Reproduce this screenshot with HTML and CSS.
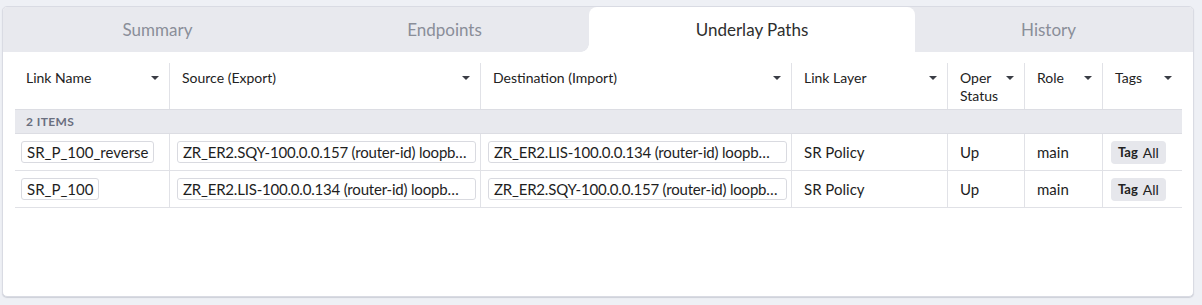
FILE: index.html
```html
<!DOCTYPE html>
<html>
<head>
<meta charset="utf-8">
<link rel="stylesheet" href="styles.css">
</head>
<body>
<div class="card">
  <div class="tabbar">
    <div class="tab">Summary</div>
    <div class="tab tab-before">Endpoints</div>
    <div class="tab tab-active">Underlay Paths</div>
    <div class="tab tab-after">History</div>
  </div>
  <div class="grid">
    <div class="row head">
      <div class="hcell"><span class="htext">Link Name</span><span class="caret"></span></div>
      <div class="hcell"><span class="htext">Source (Export)</span><span class="caret"></span></div>
      <div class="hcell"><span class="htext">Destination (Import)</span><span class="caret"></span></div>
      <div class="hcell"><span class="htext">Link Layer</span><span class="caret"></span></div>
      <div class="hcell"><span class="htext">Oper<br>Status</span><span class="caret"></span></div>
      <div class="hcell"><span class="htext">Role</span><span class="caret"></span></div>
      <div class="hcell"><span class="htext">Tags</span><span class="caret"></span></div>
    </div>
    <div class="group">2 ITEMS</div>
    <div class="row data">
      <div class="cell boxed first"><span class="box">SR_P_100_reverse</span></div>
      <div class="cell boxed"><span class="box wide">ZR_ER2.SQY-100.0.0.157 (router-id) loopb…</span></div>
      <div class="cell boxed"><span class="box wide">ZR_ER2.LIS-100.0.0.134 (router-id) loopb…</span></div>
      <div class="cell">SR Policy</div>
      <div class="cell">Up</div>
      <div class="cell">main</div>
      <div class="cell tagcell"><span class="chip"><b>Tag</b> All</span></div>
    </div>
    <div class="row data">
      <div class="cell boxed first"><span class="box">SR_P_100</span></div>
      <div class="cell boxed"><span class="box wide">ZR_ER2.LIS-100.0.0.134 (router-id) loopb…</span></div>
      <div class="cell boxed"><span class="box wide">ZR_ER2.SQY-100.0.0.157 (router-id) loopb…</span></div>
      <div class="cell">SR Policy</div>
      <div class="cell">Up</div>
      <div class="cell">main</div>
      <div class="cell tagcell"><span class="chip"><b>Tag</b> All</span></div>
    </div>
  </div>
</div>
</body>
</html>
```

FILE: styles.css
```css
* { box-sizing: border-box; }

html, body {
  margin: 0;
  padding: 0;
  background: #eef0f5;
}

body {
  font-family: Lato, "Noto Sans", sans-serif;
  color: #1e1e1e;
  padding: 6px 8px 8px 2px;
}

.card {
  height: 291px;
  background: #fff;
  border: 1px solid #d9dbe3;
  border-radius: 5px;
  box-shadow: 0 1px 1px rgba(60, 64, 90, 0.18);
  overflow: hidden;
}

.tabbar {
  display: grid;
  grid-template-columns: 285px 289px 326px 1fr;
  height: 45px;
  padding: 0 11px 0 12px;
  background: #e8e9ee;
}

.tab {
  display: flex;
  align-items: center;
  justify-content: center;
  font-size: 17px;
  color: #8a8e99;
  background: #e8e9ee;
  position: relative;
}

.tab-active {
  background: #fff;
  color: #2e2e2e;
  border-radius: 8px 8px 0 0;
}

.tab-active::before,
.tab-active::after {
  content: "";
  position: absolute;
  bottom: 0;
  width: 8px;
  height: 8px;
}

.tab-active::before {
  left: -8px;
  background: radial-gradient(circle at 0 0, #e8e9ee 7.5px, #fff 8px);
}

.tab-active::after {
  right: -8px;
  background: radial-gradient(circle at 100% 0, #e8e9ee 7.5px, #fff 8px);
}

.grid {
  padding: 11px 11px 0 12px;
}

.row {
  display: grid;
  grid-template-columns: 154px 311px 311px 156px 77px 78px 1fr;
}

.head {
  height: 47px;
  border-bottom: 1px solid #dfe0e6;
}

.hcell {
  display: flex;
  align-items: flex-start;
  justify-content: space-between;
  padding: 6px 10px 0 12px;
  border-left: 1px solid #e1e2e7;
  font-size: 14px;
  line-height: 18px;
  color: #222;
}

.hcell:first-child {
  border-left: none;
  padding-left: 11px;
}

.caret {
  flex: none;
  width: 0;
  height: 0;
  margin-top: 7px;
  border-left: 4px solid transparent;
  border-right: 4px solid transparent;
  border-top: 4px solid #3a3d45;
}

.group {
  height: 25px;
  background: #e8e9ee;
  border-top: 1px solid #dcdde3;
  border-bottom: 1px solid #dcdde3;
  margin-top: -1px;
  padding-left: 11px;
  font-size: 12px;
  font-weight: 700;
  letter-spacing: 0.4px;
  line-height: 23px;
  color: #6a6f7f;
}

.data {
  height: 37px;
  border-bottom: 1px solid #e0e1e6;
}

.cell {
  display: flex;
  align-items: center;
  min-width: 0;
  padding: 0 12px;
  border-left: 1px solid #e1e2e7;
  font-size: 15px;
  color: #1e1e1e;
}

.cell.first {
  border-left: none;
}

.cell.boxed {
  padding: 0 4px 0 7px;
}

.cell.boxed.first {
  padding-left: 6px;
}

.box {
  display: block;
  height: 22px;
  line-height: 20px;
  padding: 0 5px;
  border: 1px solid #d9dae0;
  border-radius: 3px;
  white-space: nowrap;
  overflow: hidden;
  text-overflow: ellipsis;
}

.box.wide {
  width: 100%;
  letter-spacing: -0.2px;
}

.tagcell {
  padding-left: 8px;
}

.chip {
  display: inline-flex;
  align-items: center;
  gap: 5px;
  height: 23px;
  padding: 0 7px;
  background: #e6e7ec;
  border-radius: 4px;
  font-size: 14px;
  color: #222;
}

.chip b {
  font-weight: 700;
  font-size: 13px;
}
```
